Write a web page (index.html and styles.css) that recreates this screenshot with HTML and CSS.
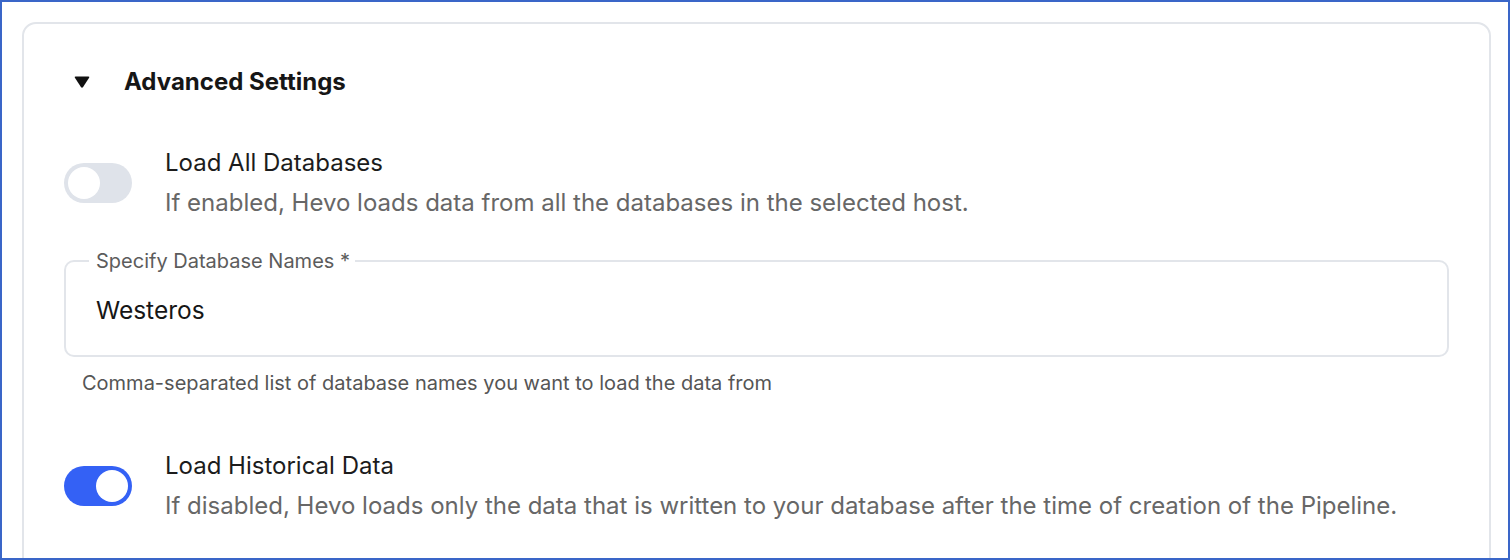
FILE: index.html
```html
<!DOCTYPE html>
<html lang="en">
<head>
<meta charset="utf-8">
<title>Advanced Settings</title>
<link rel="stylesheet" href="styles.css">
</head>
<body>
<div class="frame">
  <section class="card">
    <div class="heading">
      <svg class="caret" width="16" height="12" viewBox="0 0 16 12" aria-hidden="true"><path d="M1.6 0.5 H14.4 Q15.8 0.5 15.1 1.8 L9.1 11 Q8 12.4 6.9 11 L0.9 1.8 Q0.2 0.5 1.6 0.5 Z" fill="#111"/></svg>
      <h2 class="heading-text">Advanced Settings</h2>
    </div>

    <div class="option">
      <span class="toggle"><span class="knob"></span></span>
      <div class="option-text">
        <div class="option-title">Load All Databases</div>
        <div class="option-desc">If enabled, Hevo loads data from all the databases in the selected host.</div>
      </div>
    </div>

    <fieldset class="field">
      <legend class="field-label">Specify Database Names *</legend>
      <div class="field-value">Westeros</div>
    </fieldset>
    <div class="help">Comma-separated list of database names you want to load the data from</div>

    <div class="option option-second">
      <span class="toggle on"><span class="knob"></span></span>
      <div class="option-text">
        <div class="option-title">Load Historical Data</div>
        <div class="option-desc">If disabled, Hevo loads only the data that is written to your database after the time of creation of the Pipeline.</div>
      </div>
    </div>
  </section>
</div>
</body>
</html>
```
FILE: styles.css
```css
* { box-sizing: border-box; }
html, body { margin: 0; padding: 0; background: #fff; }
body { font-family: Inter, "Noto Sans", sans-serif; color: #1a1a1a; }

.frame {
  width: 1510px;
  height: 560px;
  border: 2px solid #3a66c8;
  overflow: hidden;
  padding: 20px 0 0 20px;
}

.card {
  width: 1469px;
  height: 700px;
  border: 2px solid #e2e5ea;
  border-radius: 14px;
  padding: 38px 40px 0 40px;
}

.heading {
  display: flex;
  align-items: center;
  height: 40px;
  padding-left: 10px;
}
.caret { display: block; }
.heading-text {
  margin: 0 0 0 34px;
  font-size: 24px;
  line-height: 40px;
  font-weight: 700;
  color: #161616;
}

.option {
  display: flex;
  align-items: center;
  margin-top: 41px;
}
.option-second { margin-top: 51px; }

.toggle {
  flex: none;
  width: 68px;
  height: 40px;
  border-radius: 20px;
  background: #dfe3ea;
  display: flex;
  align-items: center;
  padding: 0 4px;
}
.toggle .knob {
  width: 32px;
  height: 32px;
  border-radius: 50%;
  background: #fff;
}
.toggle.on { background: #3461f5; justify-content: flex-end; }

.option-text { margin-left: 33px; }
.option-title {
  font-size: 24px;
  line-height: 40px;
  color: #1c1c1c;
}
.option-desc {
  font-size: 24px;
  line-height: 40px;
  color: #676767;
}

.field {
  margin: 27px 0 0 0;
  border: 2px solid #e2e5ea;
  border-radius: 10px;
  padding: 23px 30px 30px 30px;
  min-width: 0;
}
.field-label {
  margin-left: -7px;
  padding: 0 5px 0 7px;
  font-size: 20px;
  line-height: 22px;
  color: #5c5c5c;
}
.field-value {
  font-size: 24.5px;
  line-height: 30px;
  color: #161616;
}

.help {
  margin-top: 14px;
  padding-left: 18px;
  font-size: 20px;
  line-height: 24px;
  color: #555;
}
```
